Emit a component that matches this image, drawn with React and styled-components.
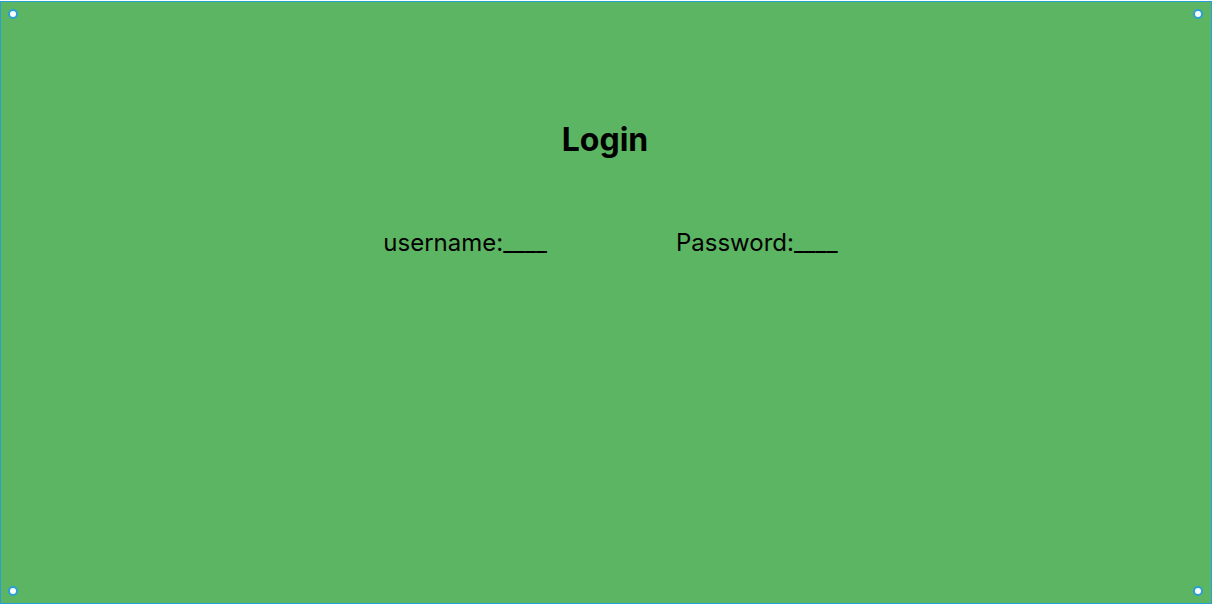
import React from "react";
import styled, { createGlobalStyle } from "styled-components";

const Global = createGlobalStyle`
  html, body {
    margin: 0;
    padding: 0;
    background: #ffffff;
  }
  body {
    font-family: Inter, "Noto Sans", sans-serif;
  }
`;

export default function App() {
  return (
    <>
      <Global />
      <Frame>
        <Handle $x="left" $y="top" />
        <Handle $x="right" $y="top" />
        <Handle $x="left" $y="bottom" />
        <Handle $x="right" $y="bottom" />
        <Title>Login</Title>
        <Fields>
          <Field>username:____</Field>
          <Field>Password:____</Field>
        </Fields>
      </Frame>
    </>
  );
}

const Frame = styled.div`
  position: relative;
  box-sizing: border-box;
  width: 1212px;
  height: 603px;
  margin-top: 1px;
  background: #5cb562;
  border: 1px solid #2a9fd6;
  display: flex;
  flex-direction: column;
  align-items: center;
  padding-top: 118px;
`;

const Handle = styled.div`
  position: absolute;
  box-sizing: border-box;
  width: 10px;
  height: 10px;
  border-radius: 50%;
  background: #ffffff;
  border: 2px solid #2a9fd6;
  ${(p) => (p.$x === "left" ? "left: 7px;" : "right: 8px;")}
  ${(p) => (p.$y === "top" ? "top: 7px;" : "bottom: 7px;")}
`;

const Title = styled.h1`
  margin: 0 0 0 -2px;
  font-size: 32px;
  font-weight: 700;
  color: #000000;
  line-height: 40px;
`;

const Fields = styled.div`
  display: flex;
  gap: 129px;
  margin-top: 68px;
  margin-left: 9px;
`;

const Field = styled.div`
  font-size: 24px;
  color: #000000;
  line-height: 30px;
  white-space: nowrap;
`;
